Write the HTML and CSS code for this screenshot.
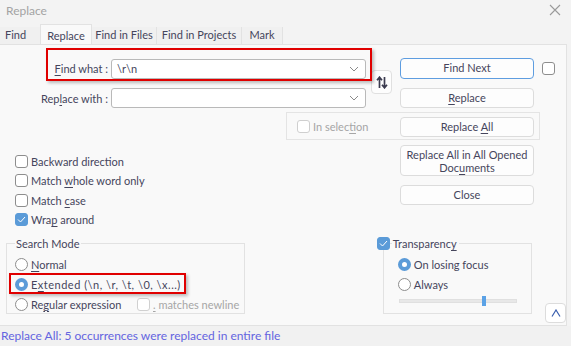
FILE: index.html
```html
<!DOCTYPE html>
<html>
<head>
    <title>Replace</title>
    <meta charset="UTF-8">
    <link rel="stylesheet" href="styles.css">
</head>
<body>
    <div id="dialogo">
        <div class="titulo">
            <span>Replace</span>
            <svg class="cerrar" width="12" height="12" viewBox="0 0 12 12"><path d="M1 1L11 11M11 1L1 11" stroke="#9a9a9a" stroke-width="1.1"/></svg>
        </div>
        <div class="pestanas">
            <span class="pestana p1">Find</span>
            <span class="pestana activa">Replace</span>
            <span class="pestana p3">Find in Files</span>
            <span class="pestana p4">Find in Projects</span>
            <span class="pestana p5">Mark</span>
        </div>
        <div class="panel">
            <!-- parte superior: campos y botones -->
            <div class="superior">
                <div class="fila">
                    <label class="etiqueta"><u>F</u>ind what :</label>
                    <div class="combo"><span>\r\n</span><svg width="10" height="6" viewBox="0 0 10 6"><path d="M1 1L5 5L9 1" fill="none" stroke="#8a8a8a"/></svg></div>
                </div>
                <span class="boton azul">Find Next</span>
                <span class="caja suelta"></span>

                <div class="fila">
                    <label class="etiqueta">Rep<u>l</u>ace with :</label>
                    <div class="combo"><svg width="10" height="6" viewBox="0 0 10 6"><path d="M1 1L5 5L9 1" fill="none" stroke="#8a8a8a"/></svg></div>
                </div>
                <span class="boton"><u>R</u>eplace</span>

                <div class="grupoSeleccion"><span class="caja"></span><span class="gris">In selec<u>t</u>ion</span></div>
                <span class="boton todo">Replace <u>A</u>ll</span>

                <span class="intercambio"><svg width="12" height="13" viewBox="0 0 12 13"><path d="M3.5 12V1.5M1 4.2L3.5 1.2L6 4.2M8.5 1V11.5M6 8.8L8.5 11.8L11 8.8" fill="none" stroke="#3b3b4f" stroke-width="1.7"/></svg></span>
                <div class="marca marcaFind"></div>
            </div>

            <div class="medio">
                <div class="opciones">
                    <div class="opcion"><span class="caja"></span><span>Backward direction</span></div>
                    <div class="opcion"><span class="caja"></span><span>Match <u>w</u>hole word only</span></div>
                    <div class="opcion"><span class="caja"></span><span>Match <u>c</u>ase</span></div>
                    <div class="opcion"><span class="caja marcada"><svg width="9" height="7" viewBox="0 0 9 7"><path d="M1 3.5L3.5 6L8 1" fill="none" stroke="#fff" stroke-width="1"/></svg></span><span>Wra<u>p</u> around</span></div>
                </div>
                <div class="botones">
                    <span class="boton doble">Replace All in All Opened<br>Doc<u>u</u>ments</span>
                    <span class="boton">Close</span>
                </div>
            </div>

            <div class="inferior">
                <div class="grupo modo">
                    <div class="leyenda"><span>Search Mode</span></div>
                    <div class="opcion"><span class="radio"></span><span><u>N</u>ormal</span></div>
                    <div class="opcion"><span class="radio activo"></span><span class="extendido">E<u>x</u>tended (\n, \r, \t, \0, \x...)</span></div>
                    <div class="opcion"><span class="radio"></span><span class="regular">Re<u>g</u>ular expression</span><span class="caja nueva"></span><span class="gris"><u>.</u> matches newline</span></div>
                    <div class="marca marcaModo"></div>
                </div>
                <div class="grupo transparencia">
                    <div class="leyenda"><span class="caja marcada"><svg width="9" height="7" viewBox="0 0 9 7"><path d="M1 3.5L3.5 6L8 1" fill="none" stroke="#fff" stroke-width="1"/></svg></span><span>Transparenc<u>y</u></span></div>
                    <div class="opcion"><span class="radio activo"></span><span>On losing focus</span></div>
                    <div class="opcion"><span class="radio"></span><span>Always</span></div>
                    <div class="deslizador"><span class="pomo"></span></div>
                </div>
                <span class="plegar"><svg width="10" height="8" viewBox="0 0 10 8"><path d="M1 7.5L5 1L9 7.5" fill="none" stroke="#3a5fae" stroke-width="1.2"/></svg></span>
            </div>
        </div>
        <div class="estado">Replace All: 5 occurrences were replaced in entire file</div>
    </div>
</body>
</html>
```

FILE: styles.css
```css
body{
    margin: 0;
    background-color: #f3f3f3;
    font: 11px Lato, sans-serif;
    color: #45455c;
}
#dialogo{
    width: 571px;
    height: 346px;
    display: flex;
    flex-direction: column;
    overflow: hidden;
}
u{
    text-decoration-thickness: 1px;
    text-underline-offset: 2px;
}

.titulo{
    height: 24px;
    display: flex;
    align-items: center;
    justify-content: space-between;
    padding: 0 10px 4px 6px;
    box-sizing: border-box;
    color: #a3a3a3;
    font-size: 12px;
}

.pestanas{
    height: 20px;
    display: flex;
    align-items: flex-end;
}
.pestana{
    height: 17px;
    line-height: 16px;
    text-align: center;
    background-color: #f0f0f0;
    border-right: 1px solid #e2e2e2;
    box-sizing: border-box;
}
.pestana.p1{
    width: 40px;
    border-right: none;
    text-align: left;
    padding-left: 5px;
}
.pestana.p3{
    width: 65px;
}
.pestana.p4{
    width: 85px;
}
.pestana.p5{
    width: 41px;
}
.pestana.activa{
    width: 52px;
    height: 21px;
    line-height: 21px;
    margin-bottom: -1px;
    background-color: #f9f9f9;
    border: 1px solid #e2e2e2;
    border-bottom: none;
}

.panel{
    width: 567px;
    height: 282px;
    box-sizing: border-box;
    background-color: #f9f9f9;
    border-top: 1px solid #e2e2e2;
    border-right: 1px solid #e2e2e2;
    border-bottom: 1px solid #e2e2e2;
    position: relative;
}

.superior{
    display: grid;
    grid-template-columns: 400px 134px 1fr;
    grid-template-rows: 21px 20px 20px;
    row-gap: 9px;
    margin-top: 13px;
    position: relative;
}
.fila{
    display: flex;
    align-items: center;
    grid-column: 1;
}
.etiqueta{
    width: 108px;
    text-align: right;
    margin-right: 3px;
}
.combo{
    width: 255px;
    height: 20px;
    box-sizing: border-box;
    background-color: #fff;
    border: 1px solid #b9b9b9;
    border-radius: 3px;
    display: flex;
    align-items: center;
    padding: 0 6px 0 5px;
}
.combo svg{
    margin-left: auto;
}

.boton{
    grid-column: 2;
    height: 20px;
    line-height: 18px;
    box-sizing: border-box;
    text-align: center;
    background-color: #fdfdfd;
    border: 1px solid #dcdcdc;
    border-radius: 4px;
}
.boton.azul{
    height: 21px;
    border-color: #5e9de0;
}
.boton.todo{
    grid-row: 3;
    z-index: 1;
}
.boton.doble{
    height: 31px;
    line-height: 13px;
    padding-top: 2px;
}

.caja{
    display: inline-flex;
    align-items: center;
    justify-content: center;
    width: 13px;
    height: 13px;
    box-sizing: border-box;
    border: 1px solid #8d8d8d;
    border-radius: 3px;
    background-color: #fff;
    margin-right: 3px;
    flex: none;
}
.caja.marcada{
    background-color: #5b9bd8;
    border-color: #5b9bd8;
}
.caja.suelta{
    align-self: center;
    margin-left: 8px;
}
.gris{
    color: #a6a6a6;
}

.grupoSeleccion{
    grid-column: 1 / 3;
    grid-row: 3;
    margin: -5px -6px -3px 286px;
    border: 1px solid #e4e4e4;
    display: flex;
    align-items: center;
    padding-left: 10px;
}
.grupoSeleccion .caja{
    border-color: #cfcfcf;
}

.intercambio{
    position: absolute;
    left: 371px;
    top: 12px;
    width: 21px;
    height: 24px;
    box-sizing: border-box;
    border: 1px solid #e0e0e0;
    border-radius: 4px;
    background-color: #fdfdfd;
    display: flex;
    align-items: center;
    justify-content: center;
}

.marca{
    position: absolute;
    border: 2px solid #e00000;
    box-shadow: 2px 2px 3px rgba(0, 0, 0, 0.25);
}
.marcaFind{
    left: 46px;
    top: -10px;
    width: 322px;
    height: 29px;
}
.marcaModo{
    left: 2px;
    top: 29px;
    width: 173px;
    height: 17px;
}

.medio{
    display: flex;
    margin-top: 8px;
    height: 80px;
}
.opciones{
    width: 400px;
    padding: 7px 0 0 15px;
    box-sizing: border-box;
}
.opcion{
    display: flex;
    align-items: center;
    height: 19.3px;
    white-space: nowrap;
}
.botones{
    width: 134px;
    display: flex;
    flex-direction: column;
    gap: 9px;
}

.inferior{
    display: flex;
    align-items: flex-start;
    margin-top: 18px;
}
.grupo{
    border: 1px solid #e2e2e2;
    box-sizing: border-box;
    height: 71px;
    position: relative;
}
.leyenda{
    display: flex;
    align-items: center;
    height: 16px;
    margin-top: -9px;
}
.leyenda span{
    background-color: #f9f9f9;
    padding: 0 2px 0 1px;
}
.modo{
    width: 240px;
    margin-left: 6px;
    padding: 0 0 0 8px;
}
.grupo .opcion{
    height: 20px;
}
.leyenda + .opcion{
    margin-top: 3px;
}
.radio{
    width: 13px;
    height: 13px;
    box-sizing: border-box;
    border: 1px solid #8d8d8d;
    border-radius: 50%;
    background-color: #fff;
    margin-right: 3px;
    flex: none;
}
.radio.activo{
    border: 4px solid #5b9bd8;
}
.extendido{
    letter-spacing: 0.5px;
}
.regular{
    width: 106px;
}
.caja.nueva{
    border-color: #d0d0d0;
}
.transparencia{
    width: 150px;
    margin-left: 138px;
    padding: 0 0 0 14px;
}
.transparencia .leyenda{
    margin-left: -21px;
}
.leyenda .caja.marcada{
    padding: 0;
    margin-right: 2px;
    background-color: #5b9bd8;
}
.deslizador{
    position: relative;
    width: 118px;
    height: 4px;
    margin: 5px 0 0 1px;
    background-color: #e8e8e8;
    border: 1px solid #e0e0e0;
    box-sizing: border-box;
}
.pomo{
    position: absolute;
    left: 82px;
    top: -4px;
    width: 4px;
    height: 10px;
    background-color: #5ba2e6;
}
.plegar{
    width: 21px;
    height: 20px;
    box-sizing: border-box;
    margin: 60px 0 0 13px;
    border: 1px solid #dcdcdc;
    border-radius: 4px;
    background-color: #fff;
    display: flex;
    align-items: center;
    justify-content: center;
}

.estado{
    flex: 1;
    background-color: #f1f1f1;
    color: #6464e0;
    font-size: 12px;
    padding: 2px 0 0 1px;
}
```
